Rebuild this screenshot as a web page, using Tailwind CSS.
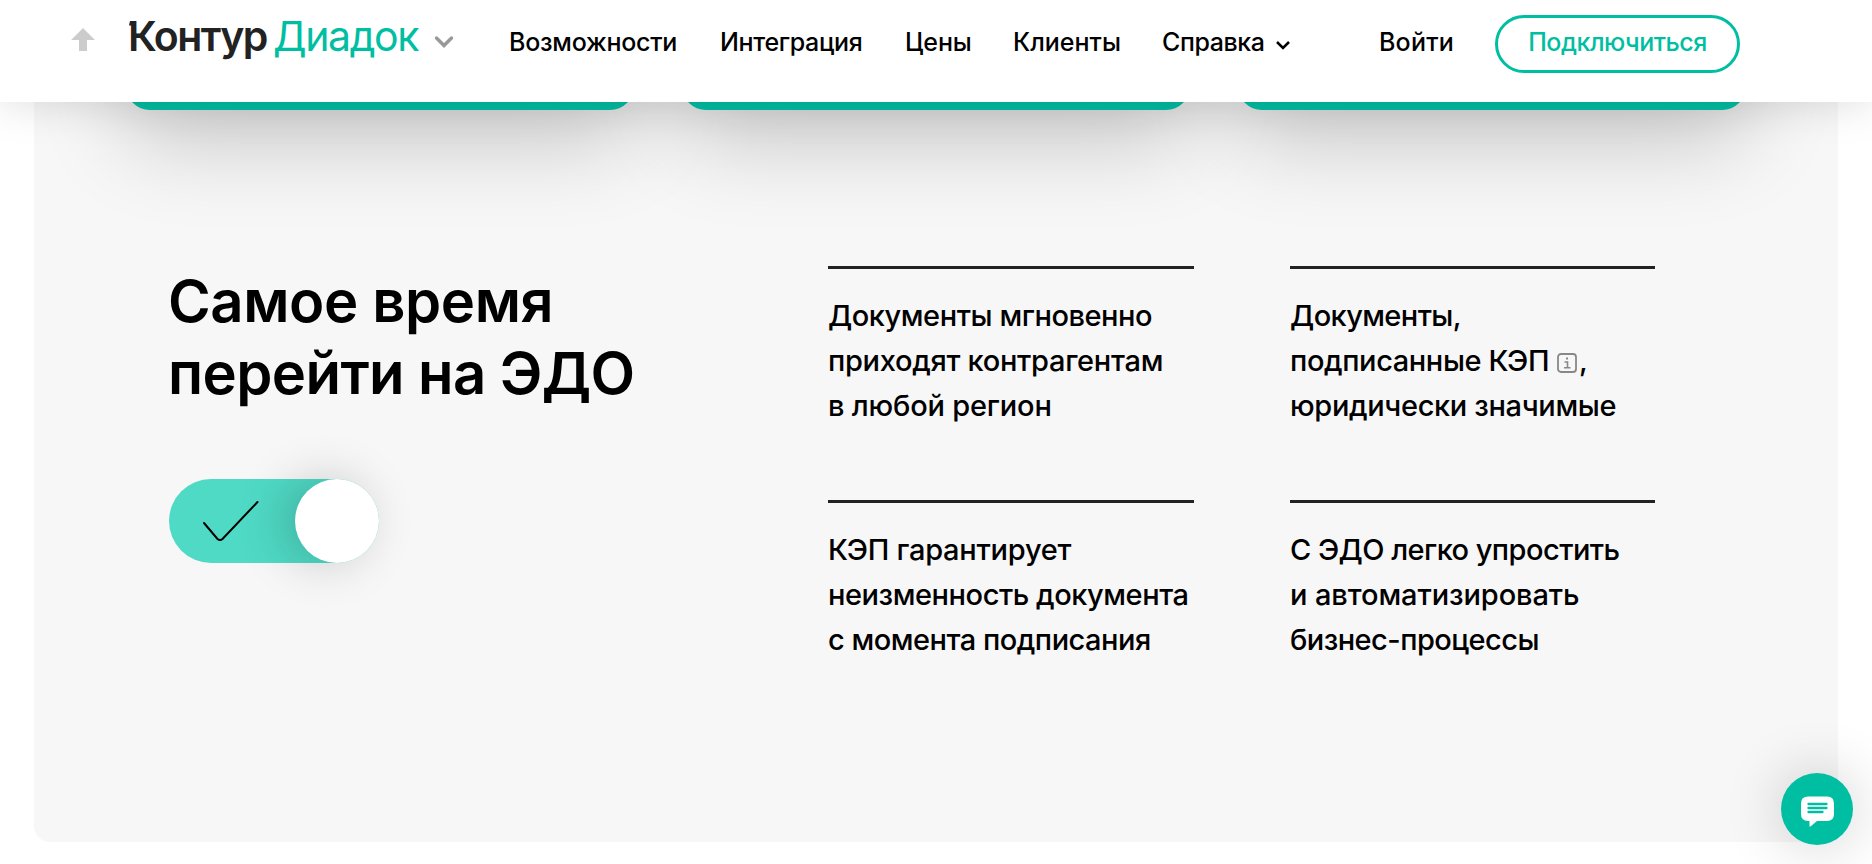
<!DOCTYPE html>
<html lang="ru">
<head>
    <meta charset="UTF-8">
    <meta name="viewport" content="width=device-width, initial-scale=1.0">
    <title>Контур.Диадок</title>
    <script src="https://cdn.jsdelivr.net/npm/@tailwindcss/browser@4"></script>
</head>
<body class="h-screen overflow-hidden bg-white font-[Inter,sans-serif] text-black">

    <!-- Header -->
    <header class="relative z-20 flex h-[102px] items-start bg-white pl-[71px] whitespace-nowrap shadow-[0_0_45px_rgba(0,0,0,0.15)]">
        <svg class="mt-7 h-6 w-6 shrink-0" viewBox="0 0 24 24" fill="#ccc"><path d="M12 0 24 12H16V23H8V12H0Z"/></svg>

        <a class="relative mt-3 ml-[33px] flex w-[292px] text-[41px] leading-[48px]">
            <svg class="absolute top-[9px] left-[1px] h-[6px] w-[7px]" viewBox="0 0 7 6" fill="#222"><path d="M1 0H7V6H3V4.500H0Z"/></svg>
            <span class="w-[145px] font-semibold tracking-[-1.5px] text-[#222]">Контур</span>
            <span class="font-normal tracking-[-1.400px] text-[#00bea2]">Диадок</span>
        </a>
        <svg class="mt-[35px] ml-[14px] h-[14px] w-[20px] shrink-0" viewBox="0 0 20 14" fill="none" stroke="#999" stroke-width="3.500" stroke-linecap="round"><path d="M2.500 3 10 10.500 17.500 3"/></svg>

        <nav class="mt-[27px] ml-[55px] flex text-[25px] leading-[30px] font-medium">
            <a class="w-[211px] tracking-[-0.250px]">Возможности</a>
            <a class="w-[185px] tracking-[-0.350px]">Интеграция</a>
            <a class="w-[108px] tracking-[-0.100px]">Цены</a>
            <a class="w-[149px]">Клиенты</a>
            <a class="flex w-[217px] items-start tracking-[-0.400px]">Справка
                <svg class="mt-[12px] ml-[10px] h-[12px] w-[16px]" viewBox="0 0 16 12" fill="none" stroke="#000" stroke-width="2.500"><path d="M2 3 8 9 14 3"/></svg>
            </a>
            <a class="w-[75px] tracking-[0.200px]">Войти</a>
        </nav>
        <a class="mt-[15px] ml-[41px] flex h-[58px] w-[245px] items-center justify-center rounded-full border-3 border-[#00bea2] pb-[3px] text-[25px] font-medium tracking-[-0.500px] text-[#00bea2]">Подключиться</a>
    </header>

    <!-- Section -->
    <main class="relative ml-[34px] h-[740px] w-[1804px] overflow-hidden rounded-b-2xl bg-[#f7f7f7]">
        <div class="-mt-[392px] grid h-[400px] grid-cols-3 gap-12 px-[92px]">
            <div class="rounded-3xl bg-[#00bba0] shadow-[0_30px_90px_rgba(0,0,0,0.2)]"></div>
            <div class="rounded-3xl bg-[#00bba0] shadow-[0_30px_90px_rgba(0,0,0,0.2)]"></div>
            <div class="rounded-3xl bg-[#00bba0] shadow-[0_30px_90px_rgba(0,0,0,0.2)]"></div>
        </div>

        <div class="flex pt-[156px] pl-[135px]">
            <div class="w-[659px] whitespace-nowrap">
                <h2 class="-mt-px -ml-px text-[58px] leading-[72px] font-semibold">
                    <span class="block tracking-[-0.400px]">Самое время</span>
                    <span class="block tracking-[-0.600px]">перейти на ЭДО</span>
                </h2>
                <!-- Toggle -->
                <div class="mt-[70px] flex h-[84px] w-[210px] items-center justify-between rounded-full bg-[#4fdac5]">
                    <svg class="ml-[33px] h-[44px] w-[58px]" viewBox="0 0 58 44" fill="none" stroke="#000" stroke-width="2" stroke-linecap="round"><path d="M2 24 15.500 40Q18 42 20.500 40L55.500 3"/></svg>
                    <div class="h-[84px] w-[84px] rounded-full bg-white shadow-[-12px_0_50px_rgba(0,0,0,0.2)]"></div>
                </div>
            </div>

            <div class="grid grid-cols-[366px_365px] gap-x-24 text-[29px] leading-[45px] font-medium whitespace-nowrap">
                <div class="h-[234px] border-t-3 border-[#222] pt-6">
                    <p class="tracking-[-0.450px]">Документы мгновенно</p>
                    <p class="tracking-[-0.300px]">приходят контрагентам</p>
                    <p class="tracking-[-0.200px]">в любой регион</p>
                </div>
                <div class="h-[234px] border-t-3 border-[#222] pt-6">
                    <p class="tracking-[-0.600px]">Документы,</p>
                    <p class="flex tracking-[-0.400px]">подписанные КЭП<svg class="mt-[15px] mr-[2px] ml-[8px] h-5 w-5" viewBox="0 0 20 20" fill="none" stroke="#888"><rect x="1" y="1" width="18" height="18" rx="3" stroke-width="1.800"/><path d="M7.500 9H10.500V14.500M7 14.750H13.500" stroke-width="1.600"/><rect x="9" y="4.500" width="2" height="2" fill="#888" stroke="none"/></svg>,</p>
                    <p class="tracking-[-0.350px]">юридически значимые</p>
                </div>
                <div class="border-t-3 border-[#222] pt-6">
                    <p class="tracking-[-0.250px]">КЭП гарантирует</p>
                    <p class="tracking-[-0.450px]">неизменность документа</p>
                    <p class="tracking-[-0.500px]">с момента подписания</p>
                </div>
                <div class="border-t-3 border-[#222] pt-6">
                    <p class="tracking-[-0.550px]">С ЭДО легко упростить</p>
                    <p class="tracking-[-0.100px]">и автоматизировать</p>
                    <p class="tracking-[-0.550px]">бизнес-процессы</p>
                </div>
            </div>
        </div>
    </main>

    <!-- Chat button -->
    <button class="fixed right-[19px] bottom-[19px] z-30 flex h-[72px] w-[72px] items-center justify-center rounded-full bg-[#00bea2] shadow-[0_0_60px_rgba(0,0,0,0.2)]">
        <svg class="mt-[4px] h-[31px] w-[33px]" viewBox="0 0 33 31"><path d="M7 0.500H26Q33 0.500 33 7.500V18Q33 25 26 25H16L9.500 30.500H8.500V25H7Q0 25 0 18V7.500Q0 0.500 7 0.500Z" fill="#fff"/><path d="M7.500 8H25.500M7.500 12H25.500M7.500 16H21.500" stroke="#00bea2" stroke-width="2.300" stroke-linecap="round"/></svg>
    </button>
</body>
</html>
